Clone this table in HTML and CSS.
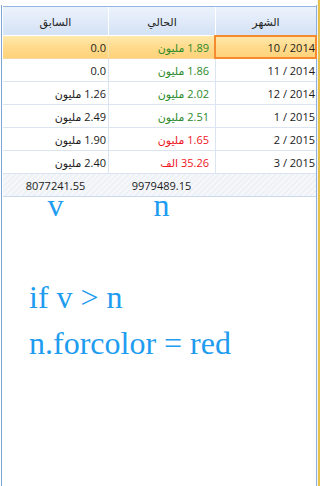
FILE: index.html
```html
<!DOCTYPE html>
<html lang="ar">
<head>
<meta charset="utf-8">
<link rel="stylesheet" href="styles.css">
</head>
<body>
<div class="page">
  <div class="panel">
    <div class="table">
      <div class="row head">
        <div class="cell">الشهر</div>
        <div class="cell">الحالي</div>
        <div class="cell">السابق</div>
      </div>
      <div class="row selected">
        <div class="cell month current-cell">10 / 2014</div>
        <div class="cell cur green">1.89 مليون</div>
        <div class="cell prev">0.0</div>
      </div>
      <div class="row">
        <div class="cell month">11 / 2014</div>
        <div class="cell cur green">1.86 مليون</div>
        <div class="cell prev">0.0</div>
      </div>
      <div class="row">
        <div class="cell month">12 / 2014</div>
        <div class="cell cur green">2.02 مليون</div>
        <div class="cell prev">1.26 مليون</div>
      </div>
      <div class="row">
        <div class="cell month">1 / 2015</div>
        <div class="cell cur green">2.51 مليون</div>
        <div class="cell prev">2.49 مليون</div>
      </div>
      <div class="row">
        <div class="cell month">2 / 2015</div>
        <div class="cell cur red">1.65 مليون</div>
        <div class="cell prev">1.90 مليون</div>
      </div>
      <div class="row">
        <div class="cell month">3 / 2015</div>
        <div class="cell cur red">35.26 الف</div>
        <div class="cell prev">2.40 مليون</div>
      </div>
      <div class="row footer">
        <div class="cell"></div>
        <div class="cell">9979489.15</div>
        <div class="cell">8077241.55</div>
      </div>
    </div>
    <div class="vars">
      <div class="var"></div>
      <div class="var">n</div>
      <div class="var">v</div>
    </div>
    <div class="code">
      <p>if v &gt; n</p>
      <p>n.forcolor = red</p>
    </div>
  </div>
  <div class="gap"></div>
  <div class="edge"></div>
</div>
</body>
</html>
```

FILE: styles.css
```css
* { box-sizing: border-box; }
html, body {
  margin: 0;
  padding: 0;
  background: #ffffff;
}
body {
  width: 320px;
  height: 486px;
  overflow: hidden;
  font-family: "Open Sans", "DejaVu Sans", sans-serif;
  font-size: 11px;
  color: #1b1b1b;
}
.page {
  display: flex;
  height: 486px;
}
.panel {
  flex: 1;
  margin-top: 5px;
  margin-left: 1px;
  border-left: 1px solid #7fa4d6;
  border-right: 1px solid #8eaede;
  padding-left: 1px;
  min-width: 0;
}
.gap {
  width: 1px;
  background: #f3f3ee;
}
.edge {
  width: 2px;
  background: #e6c24c;
}
.table {
  direction: rtl;
  margin-top: 1px;
}
.row {
  display: grid;
  grid-template-columns: 101px 107px 105px;
  height: 23px;
  border-bottom: 1px solid #dbe5f2;
}
.cell {
  display: flex;
  align-items: center;
  justify-content: flex-start;
  border-left: 1px solid #dbe5f2;
  white-space: nowrap;
}
.cell:last-child { border-left: none; }
.head {
  height: 30px;
  border-top: 1px solid #95b4e0;
  border-bottom: 1px solid #ffffff;
  background: linear-gradient(to bottom, #ecf3fc 0%, #dfe9f8 55%, #d3e2f6 100%);
}
.head .cell {
  justify-content: center;
  border-left: 1px solid #ffffff;
  color: #222;
}
.head .cell:last-child { border-left: none; }
.month {
  direction: ltr;
  justify-content: flex-end;
  padding-right: 1px;
}
.cur { padding-right: 6px; }
.prev { padding-right: 2px; }
.green { color: #2a8a2a; }
.red { color: #f0141e; }
.selected {
  background: linear-gradient(to bottom, #ffe9ae 0%, #ffdb8c 50%, #ffd27a 100%);
  border-bottom-color: #f4d8a0;
}
.selected .cell { border-left-color: #f7e2b0; }
.current-cell {
  outline: 2px solid #f68a2e;
  outline-offset: -1px;
}
.footer {
  height: 23px;
  border-bottom: 1px solid #cbd9ee;
  background: repeating-linear-gradient(135deg, #eef1f6 0 2px, #f6f7fa 2px 4px);
}
.footer .cell {
  border-left: none;
  justify-content: center;
  color: #1b1b1b;
}
.vars {
  direction: rtl;
  display: grid;
  grid-template-columns: 101px 107px 105px;
  height: 14px;
  margin-top: 1px;
  font-family: "Liberation Serif", "Times New Roman", serif;
  font-size: 32px;
  line-height: 14px;
  color: #1d9cf0;
}
.var {
  text-align: center;
}
.code {
  margin-top: 62px;
  padding-left: 26px;
  font-family: "Liberation Serif", "Times New Roman", serif;
  font-size: 32px;
  line-height: 46px;
  color: #1d9cf0;
}
.code p {
  margin: 0;
}
```
